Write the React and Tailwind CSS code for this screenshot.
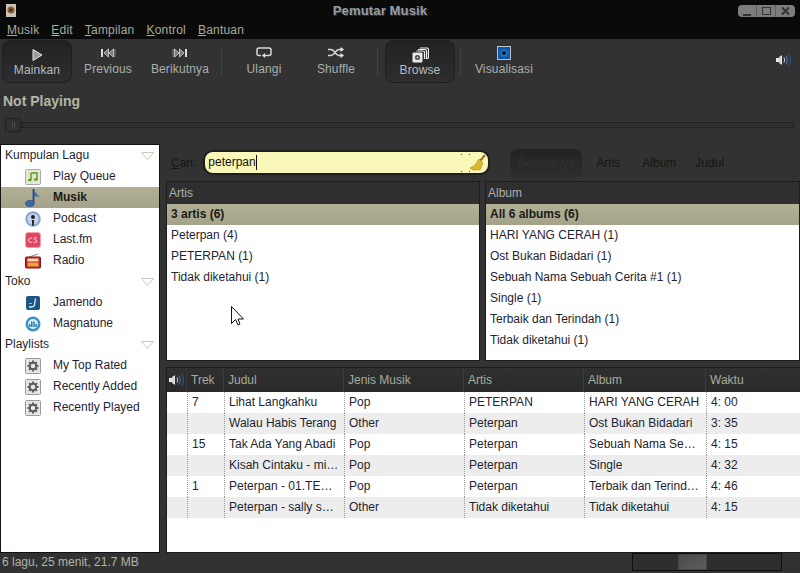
import React from 'react';

const FONT = { fontFamily: '"Liberation Sans", Arial, sans-serif' };

function Speaker({ className = '' }) {
  return (
    <svg viewBox="0 0 18 16" className={className}>
      <path d="M1 6h2.500L7 3v10L3.500 10H1z" fill="#e8e8e8" />
      <path d="M5 4v8" stroke="#bbb" strokeWidth="1" />
      <path d="M9 5.500q1.500 2.500 0 5" stroke="#d0d0d0" fill="none" />
      <path d="M11 3.500q3 4.500 0 9" stroke="#4a78b8" fill="none" />
      <path d="M13.500 1.500q4 6.500 0 13" stroke="#2f5c9e" fill="none" />
    </svg>
  );
}

function PlayIcon() {
  return (
    <svg viewBox="0 0 14 14" className="w-[14px] h-[14px]">
      <path d="M3 1.500L12 7 3 12.500z" fill="#9a9a9a" stroke="#e8e8e8" strokeWidth="1" />
    </svg>
  );
}

function SkipIcon({ flip }) {
  return (
    <svg viewBox="0 0 16 10" className={`w-4 h-[10px] ${flip ? '-scale-x-100' : ''}`}>
      <path d="M1 1h2v8H1z" fill="#ddd" />
      <path d="M8.500 1v8L4 5zM13.500 1v8L9 5z" fill="#777" stroke="#ddd" strokeWidth="0.800" />
      <path d="M15 1v8" stroke="#999" strokeWidth="0.800" />
    </svg>
  );
}

function RepeatIcon() {
  return (
    <svg viewBox="0 0 16 11" className="w-4 h-[11px]">
      <path d="M5 8.500H3Q1 8.500 1 6.500V3Q1 1 3 1h10q2 0 2 2v3.500q0 2-2 2H8" fill="none" stroke="#d8d8d8" strokeWidth="1.500" />
      <path d="M9 6v5L6 8.500z" fill="#e8e8e8" />
    </svg>
  );
}

function ShuffleIcon() {
  return (
    <svg viewBox="0 0 16 11" className="w-4 h-[11px]">
      <path d="M0 2.500h3q2 0 4 3t4 3h2M0 8.500h3q2 0 4-3t4-3h2" fill="none" stroke="#d8d8d8" strokeWidth="1.400" />
      <path d="M12.500 0l3.500 2.500L12.500 5zM12.500 6l3.500 2.500L12.500 11z" fill="#e8e8e8" />
    </svg>
  );
}

function BrowseIcon() {
  return (
    <svg viewBox="0 0 17 16" className="w-[17px] h-4">
      <path d="M8 1h7q1.500 0 1.500 1.500V10q0 1.500-1.500 1.500" fill="none" stroke="#eee" strokeWidth="1.200" />
      <path d="M6 2.500h7q1.500 0 1.500 1.500v8" fill="none" stroke="#eee" strokeWidth="1.200" />
      <path d="M4.500 4h7q1 0 1 1v7" fill="none" stroke="#eee" strokeWidth="1.200" />
      <rect x="0.500" y="5.500" width="10" height="10" rx="1" fill="#e6e6e6" />
      <circle cx="5.500" cy="10.500" r="2.500" fill="#444" />
      <circle cx="5.500" cy="10.500" r="1" fill="#ddd" />
    </svg>
  );
}

function VisualIcon() {
  return (
    <svg viewBox="0 0 14 14" className="w-[14px] h-[14px]">
      <rect x="0.500" y="0.500" width="13" height="13" fill="#0f57a8" stroke="#b8c0c8" />
      <circle cx="7" cy="7" r="3.500" fill="#1c7ad0" />
      <circle cx="7" cy="7" r="2" fill="#06121f" />
    </svg>
  );
}

function Broom() {
  return (
    <svg viewBox="0 0 26 18" className="w-[26px] h-[18px]">
      <path d="M0 0h1v1H0zM8 0h1v1H8zM0 17h1v1H0zM8 17h1v1H8z" fill="#444" />
      <path d="M24 1l-5 6" stroke="#9a6a2a" strokeWidth="2" />
      <path d="M18 5l4 4-3 7-3-.5-1 1-2-.8-1 .3-3-2 3-1.500q3-2 6-7.500z" fill="#dcb92c" stroke="#a3851d" strokeWidth="0.600" />
    </svg>
  );
}

function NoteTile() {
  return (
    <svg viewBox="0 0 16 16" className="w-4 h-4">
      <rect x="0.500" y="0.500" width="15" height="15" rx="1" fill="#e8e8e0" stroke="#aaa" />
      <rect x="2.500" y="2.500" width="11" height="11" fill="#dfe6c8" />
      <path d="M6 4h6v6.500M6 4v7" fill="none" stroke="#5aa01e" strokeWidth="1.400" />
      <ellipse cx="4.800" cy="11" rx="1.800" ry="1.300" fill="#5aa01e" />
      <ellipse cx="10.800" cy="10.500" rx="1.800" ry="1.300" fill="#5aa01e" />
    </svg>
  );
}

function MusicNote() {
  return (
    <svg viewBox="0 0 16 20" className="w-4 h-5">
      <path d="M8.500 1v14" stroke="#23497f" strokeWidth="1.800" />
      <path d="M9 1q1 5 6 7.500H9z" fill="#3c69a8" />
      <ellipse cx="5" cy="15.500" rx="4.300" ry="3" fill="#3c69a8" stroke="#23497f" strokeWidth="0.700" />
    </svg>
  );
}

function PodcastIcon() {
  return (
    <svg viewBox="0 0 16 16" className="w-4 h-4">
      <circle cx="8" cy="8" r="7.800" fill="#8fa9d4" />
      <circle cx="8" cy="8" r="5.500" fill="#c8d6ec" />
      <circle cx="8" cy="6" r="2" fill="#222" />
      <path d="M6.800 9h2.400l-.5 6H7.300z" fill="#222" />
    </svg>
  );
}

function LastfmIcon() {
  return (
    <svg viewBox="0 0 16 16" className="w-4 h-4">
      <rect x="0.500" y="0.500" width="15" height="15" rx="2.500" fill="#e2455f" stroke="#f0a0ae" />
      <path d="M7 6.500a2.200 2.200 0 1 0 0 3.500M8.500 10.200c2 .5 3.500 0 3.500-1.200s-3-1-3-2.200 1.500-1.300 3-.8" fill="none" stroke="#fbd5dc" strokeWidth="1" />
    </svg>
  );
}

function RadioIcon() {
  return (
    <svg viewBox="0 0 16 16" className="w-4 h-4">
      <path d="M4 4l9-3" stroke="#888" />
      <rect x="0.500" y="4" width="15" height="11" rx="1" fill="#c8202a" stroke="#8a1218" />
      <rect x="2.500" y="5.500" width="11" height="3" fill="#f0e0b0" />
      <rect x="2.500" y="9.500" width="11" height="4" fill="#e6a838" />
    </svg>
  );
}

function JamendoIcon() {
  return (
    <svg viewBox="0 0 16 16" className="w-4 h-4">
      <rect x="1" y="1" width="14" height="14" rx="2" fill="#1d5584" />
      <path d="M10.500 3.500L9.500 10q-.5 2-3 2H4" fill="none" stroke="#dcebf5" strokeWidth="1.300" />
      <path d="M4 8.500h3" stroke="#8fbddb" />
    </svg>
  );
}

function MagnatuneIcon() {
  return (
    <svg viewBox="0 0 16 16" className="w-4 h-4">
      <circle cx="8" cy="8" r="7.500" fill="#3a94c4" />
      <circle cx="8" cy="8" r="5" fill="#d8edf6" />
      <path d="M4.800 11V8M6.800 11V5.500M9 11V5.500M11.200 11V8" stroke="#2a7eab" strokeWidth="1.500" />
    </svg>
  );
}

function GearTile() {
  return (
    <svg viewBox="0 0 16 16" className="w-4 h-4">
      <rect x="0.500" y="0.500" width="15" height="15" rx="1" fill="#e6e6e2" stroke="#999" />
      <circle cx="8" cy="8" r="3.300" fill="none" stroke="#5e5e5e" strokeWidth="2" />
      <path d="M8 2.500v2M8 11.500v2M2.500 8h2M11.500 8h2M4.100 4.100l1.400 1.400M10.500 10.500l1.400 1.400M4.100 11.900l1.400-1.400M10.500 5.500l1.400-1.400" stroke="#5e5e5e" strokeWidth="2" />
    </svg>
  );
}

function Ul({ children, rest }) {
  return (
    <span>
      <span className="underline">{children}</span>
      {rest}
    </span>
  );
}

function Chevron() {
  return (
    <svg viewBox="0 0 13 8" className="w-[13px] h-2">
      <path d="M.5.500h12L6.500 7.500z" fill="none" stroke="#c8c8bc" />
    </svg>
  );
}

function ToolButton({ icon, label, width, active }) {
  return (
    <button
      className={`flex flex-col items-center shrink-0 h-[43px] rounded-lg ${width} ${
        active
          ? 'bg-gradient-to-b from-[#222222] to-[#2e2e2e] border border-[#1e1e1e] pt-[6px] gap-[1px] text-[#b4bcc4]'
          : 'pt-[5px] gap-[2px] text-[#a8b0b0]'
      }`}
    >
      <span className="h-[15px] flex items-center justify-center">{icon}</span>
      <span className="leading-[15px] tracking-[0.15px]">{label}</span>
    </button>
  );
}

function Separator() {
  return <div className="w-px h-[27px] bg-[#444444] shrink-0" />;
}

function SourceHeader({ title }) {
  return (
    <div className="h-[21px] flex items-center justify-between pl-1 pr-[5px] text-[#1e2430]">
      <span className="mb-[2px]">{title}</span>
      <Chevron />
    </div>
  );
}

function SourceRow({ icon, label, selected }) {
  return (
    <div
      className={`h-[21px] flex items-center ${
        selected ? 'bg-gradient-to-b from-[#b2b196] to-[#a4a389] font-bold text-[#1a1a1a]' : 'text-[#1e2430]'
      }`}
    >
      <span className="w-[18px] ml-[23px] flex justify-center shrink-0">{icon}</span>
      <span className="ml-[11px] mb-[2px]">{label}</span>
    </div>
  );
}

function Pane({ title, rows, className, children }) {
  return (
    <div className={`relative flex flex-col border border-[#1c1c1c] bg-white ${className}`}>
      <div className="h-[22px] shrink-0 flex items-center px-[2px] bg-[#2f2f2f] text-[#a8b0b0]">
        {title}
      </div>
      {rows.map((r, i) => (
        <div
          key={r}
          className={`h-[21px] shrink-0 flex items-center px-1 pb-[2px] ${
            i === 0 ? 'bg-gradient-to-b from-[#b2b196] to-[#a4a389] font-bold text-[#1a1a1a]' : 'text-[#1e2430]'
          }`}
        >
          {r}
        </div>
      ))}
      {children}
    </div>
  );
}

const tracks = [
  ['7', 'Lihat Langkahku', 'Pop', 'PETERPAN', 'HARI YANG CERAH', '4: 00'],
  ['', 'Walau Habis Terang', 'Other', 'Peterpan', 'Ost Bukan Bidadari', '3: 35'],
  ['15', 'Tak Ada Yang Abadi', 'Pop', 'Peterpan', 'Sebuah Nama Se…', '4: 15'],
  ['', 'Kisah Cintaku - mi…', 'Pop', 'Peterpan', 'Single', '4: 32'],
  ['1', 'Peterpan - 01.TE…', 'Pop', 'Peterpan', 'Terbaik dan Terind…', '4: 46'],
  ['', 'Peterpan - sally s…', 'Other', 'Tidak diketahui', 'Tidak diketahui', '4: 15'],
];

const GRID = 'grid grid-cols-[20px_37px_120px_120px_120px_122px_1fr]';

export default function App() {
  return (
    <div style={FONT} className="w-[800px] h-[573px] overflow-hidden flex flex-col bg-[#323232] text-xs">
      {/* title bar + menu */}
      <div className="h-[39px] shrink-0 bg-[#0a0a0a] flex flex-col">
        <div className="h-[21px] relative flex items-center justify-center pr-[40px]">
          <svg viewBox="0 0 10 13" className="absolute left-[6px] top-[4px] w-[10px] h-[13px]">
            <rect width="10" height="13" fill="#c8c4b8" />
            <circle cx="5" cy="6" r="3.500" fill="#8a5a3a" />
            <circle cx="5" cy="6" r="1.200" fill="#222" />
          </svg>
          <span className="font-bold text-[13px] tracking-[0.15px] text-[#9a9aa6] [text-shadow:1px_1px_0_#3a3a3a]">Pemutar Musik</span>
          <div className="absolute right-[5px] top-[5px] w-[57px] h-[12px] rounded-[4px] bg-[#7c7c7c] grid grid-cols-3 divide-x divide-[#5e5e5e]">
            <span className="flex items-end justify-center pb-[1px]"><span className="w-2 h-[2px] bg-[#333333]" /></span>
            <span className="flex items-center justify-center"><span className="w-[9px] h-2 border border-[#333333]" /></span>
            <svg viewBox="0 0 19 12" className="w-full h-full"><path d="M6 2.500l7 7M13 2.500l-7 7" stroke="#333" strokeWidth="2" /></svg>
          </div>
        </div>
        <div className="flex gap-[12px] pl-[7px] h-[18px] items-center text-[#a8ad9c] tracking-[0.2px]">
          <Ul rest="usik">M</Ul>
          <Ul rest="dit">E</Ul>
          <Ul rest="ampilan">T</Ul>
          <Ul rest="ontrol">K</Ul>
          <Ul rest="antuan">B</Ul>
        </div>
      </div>

      {/* toolbar */}
      <div className="h-[45px] shrink-0 flex items-center pl-[2px] pr-[7px]">
        <ToolButton icon={<PlayIcon />} label="Mainkan" width="w-[70px]" active />
        <ToolButton icon={<SkipIcon />} label="Previous" width="w-[72px]" />
        <ToolButton icon={<SkipIcon flip />} label="Berikutnya" width="w-[72px]" />
        <div className="w-[5px]" />
        <Separator />
        <ToolButton icon={<RepeatIcon />} label="Ulangi" width="w-[84px]" />
        <ToolButton icon={<ShuffleIcon />} label="Shuffle" width="w-[60px]" />
        <div className="w-[11px]" />
        <Separator />
        <div className="w-[7px]" />
        <ToolButton icon={<BrowseIcon />} label="Browse" width="w-[70px]" active />
        <div className="w-[5px]" />
        <Separator />
        <ToolButton icon={<VisualIcon />} label="Visualisasi" width="w-[86px]" />
        <div className="flex-1" />
        <Speaker className="w-[18px] h-4 mb-[3px]" />
      </div>

      {/* now playing */}
      <div className="h-[28px] shrink-0 flex items-end pl-[3px] pb-[1px] font-bold text-[14px] text-[#b4b6a6]">Not Playing</div>

      {/* seek bar */}
      <div className="h-[14px] mt-[6px] ml-[5px] mr-[6px] shrink-0 flex items-center">
        <div className="w-[16px] h-[14px] border border-[#222222] bg-[#303030] flex items-center justify-center gap-[1px] shrink-0">
          <span className="w-px h-[7px] bg-[#4a4a4a]" />
          <span className="w-px h-[7px] bg-[#4a4a4a]" />
        </div>
        <div className="flex-1 h-[6px] border border-[#232323] bg-[#2e2e2e]" />
      </div>

      {/* main */}
      <div className="flex-1 min-h-0 flex pt-[12px]">
        <div className="w-[160px] shrink-0 border border-[#111111] bg-white">
          <SourceHeader title="Kumpulan Lagu" />
          <SourceRow icon={<NoteTile />} label="Play Queue" />
          <SourceRow icon={<MusicNote />} label="Musik" selected />
          <SourceRow icon={<PodcastIcon />} label="Podcast" />
          <SourceRow icon={<LastfmIcon />} label="Last.fm" />
          <SourceRow icon={<RadioIcon />} label="Radio" />
          <SourceHeader title="Toko" />
          <SourceRow icon={<JamendoIcon />} label="Jamendo" />
          <SourceRow icon={<MagnatuneIcon />} label="Magnatune" />
          <SourceHeader title="Playlists" />
          <SourceRow icon={<GearTile />} label="My Top Rated" />
          <SourceRow icon={<GearTile />} label="Recently Added" />
          <SourceRow icon={<GearTile />} label="Recently Played" />
        </div>

        <div className="flex-1 min-w-0 flex flex-col ml-[6px]">
          {/* search */}
          <div className="h-[37px] shrink-0 flex items-center">
            <span className="ml-[5px] text-[#161616]"><Ul rest="ari:">C</Ul></span>
            <div className="ml-[7px] w-[287px] h-[25px] rounded-[10px] border-2 border-[#1e1e1e] bg-[#f9f8b8] flex items-center pl-[3px] pr-[1px] text-[#111111]">
              <span className="border-r border-[#111111] leading-[15px]">peterpan</span>
              <span className="ml-auto"><Broom /></span>
            </div>
            <div className="ml-[20px] w-[72px] h-[28px] rounded-t-lg bg-gradient-to-b from-[#222222] to-[#2e2e2e] flex items-center justify-center text-[#333333]">Semuanya</div>
            <span className="ml-[14px] text-[#151515]">Artis</span>
            <span className="ml-[22px] text-[#151515]">Album</span>
            <span className="ml-[19px] text-[#151515]">Judul</span>
          </div>

          {/* browser panes */}
          <div className="h-[180px] shrink-0 flex gap-[5px]">
            <Pane
              title="Artis"
              className="w-[314px]"
              rows={['3 artis (6)', 'Peterpan (4)', 'PETERPAN (1)', 'Tidak diketahui (1)']}
            >
              {/* mouse pointer caught in the screenshot */}
              <svg viewBox="0 0 14 20" className="absolute left-[64px] top-[124px] w-[14px] h-5">
                <path d="M.5.500v17l4-4 2.500 5.500 2-1-2-5h5.500z" fill="#fff" stroke="#111" strokeWidth="1" />
              </svg>
            </Pane>
            <Pane
              title="Album"
              className="flex-1"
              rows={['All 6 albums (6)', 'HARI YANG CERAH (1)', 'Ost Bukan Bidadari (1)', 'Sebuah Nama Sebuah Cerita #1 (1)', 'Single (1)', 'Terbaik dan Terindah (1)', 'Tidak diketahui (1)']}
            />
          </div>

          {/* track list */}
          <div className="flex-1 min-h-0 mt-[6px] border border-r-0 border-[#1c1c1c] bg-white flex flex-col">
            <div className={`${GRID} h-[24px] shrink-0 bg-gradient-to-b from-[#303030] to-[#292929] text-[#a8ad9c] divide-x divide-[#3c3c3c]`}>
              <span className="flex items-center pl-[1px]"><Speaker className="w-[18px] h-4" /></span>
              {['Trek', 'Judul', 'Jenis Musik', 'Artis', 'Album', 'Waktu'].map((h) => (
                <span key={h} className="flex items-center pl-[4px]">{h}</span>
              ))}
            </div>
            {tracks.map((t, i) => (
              <div key={i} className={`${GRID} h-[21px] shrink-0 text-[#1e2430] ${i % 2 ? 'bg-[#ededed]' : 'bg-white'}`}>
                <span />
                {t.map((c, j) => (
                  <span key={j} className="flex items-center pl-1 pb-[2px] whitespace-nowrap overflow-hidden border-l border-dotted border-[#999999]">{c}</span>
                ))}
              </div>
            ))}
          </div>
        </div>
      </div>

      {/* status bar */}
      <div className="h-[20px] shrink-0 flex pl-[2px] text-[#b0b4a8]">
        <span className="leading-[18px]">6 lagu, 25 menit, 21.7 MB</span>
        <div className="ml-auto w-[150px] h-[18px] border border-[#111111] bg-[#2e2e2e] flex pl-[45px]">
          <div className="w-[29px] h-[16px] bg-gradient-to-br from-[#4a4a4a] to-[#5e5e5e] border border-[#444444]" />
        </div>
        <svg viewBox="0 0 18 18" className="w-[18px] h-[18px] mt-[2px]">
          <path d="M14 4h1v1h-1zM11 7h1v1h-1zM14 7h1v1h-1zM8 10h1v1H8zM11 10h1v1h-1zM14 10h1v1h-1zM5 13h1v1H5zM8 13h1v1H8zM11 13h1v1h-1zM14 13h1v1h-1z" fill="#222" />
        </svg>
      </div>
    </div>
  );
}
